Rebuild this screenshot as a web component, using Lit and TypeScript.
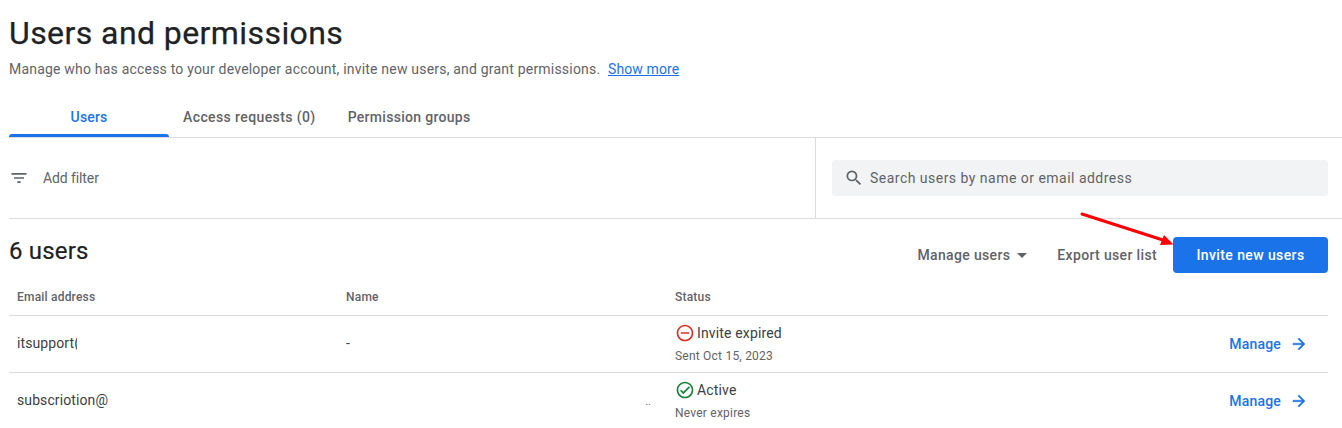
import { LitElement, html, css } from "lit";
import { customElement } from "lit/decorators.js";

const arrowRight = html`<svg class="arr" width="18" height="18" viewBox="0 0 24 24" fill="#1a73e8" stroke="#1a73e8" stroke-width="0.6"><path d="M12 4l-1.41 1.41L16.17 11H4v2h12.17l-5.58 5.59L12 20l8-8z"/></svg>`;

@customElement("app-root")
export class AppRoot extends LitElement {
  static styles = css`
    :host { display: block; position: relative; width: 1342px; height: 428px; overflow: hidden; background: #fff; font-family: Roboto, "Liberation Sans", sans-serif; color: #3c4043; }
    .page { padding-left: 9px; }
    h1 { margin: 0; padding-top: 13px; font-size: 32px; line-height: 40px; font-weight: 400; color: #202124; letter-spacing: 0.42px; -webkit-text-stroke: 0.25px #202124; }
    .desc { margin-top: 6px; font-size: 14px; line-height: 20px; color: #5f6368; letter-spacing: 0.2px; }
    .desc a { color: #1a73e8; margin-left: 4px; text-decoration: underline; letter-spacing: 0.1px; }
    .tabs { display: flex; margin-top: 16px; height: 42px; border-bottom: 1px solid #dadce0; }
    .tab { display: flex; align-items: center; justify-content: center; height: 42px; font-size: 14px; font-weight: 500; color: #5f6368; letter-spacing: 0.3px; padding-top: 2px; box-sizing: border-box; }
    .tab.on { width: 160px; color: #1a73e8; position: relative; letter-spacing: 0.15px; }
    .tab.on::after { content: ""; position: absolute; left: 0; right: 0; bottom: 0; height: 3px; background: #1a73e8; border-radius: 3px 3px 0 0; }
    .tab.a { margin-left: 14px; letter-spacing: 0.4px; }
    .tab.p { margin-left: 32px; }
    .filters { display: flex; height: 80px; border-bottom: 1px solid #dadce0; }
    .fl { width: 806px; display: flex; align-items: center; border-right: 1px solid #dadce0; color: #5f6368; font-size: 14px; letter-spacing: -0.1px; }
    .fl svg { margin-right: 14px; }
    .fr { flex: 1; display: flex; align-items: center; padding: 0 14px 0 16px; }
    .search { flex: 1; height: 36px; background: #f1f3f4; border-radius: 4px; display: flex; align-items: center; gap: 6px; padding-left: 12px; font-size: 14px; letter-spacing: 0.48px; color: #5f6368; }
    .bar { display: flex; align-items: center; justify-content: space-between; padding: 18px 14px 0 0; height: 36px; }
    h2 { margin: 0; font-size: 24px; font-weight: 400; color: #202124; letter-spacing: 0.2px; line-height: 28px; padding-bottom: 8px; -webkit-text-stroke: 0.2px #202124; }
    .actions { display: flex; align-items: center; font-size: 14px; font-weight: 500; color: #5f6368; letter-spacing: 0.35px; }
    .mu { display: flex; align-items: center; gap: 7px; margin-right: 30px; }
    .caret { width: 0; height: 0; border-left: 5px solid transparent; border-right: 5px solid transparent; border-top: 5px solid #5f6368; }
    .btn { margin-left: 16px; width: 155px; height: 36px; border-radius: 4px; background: #1a73e8; color: #fff; display: flex; align-items: center; justify-content: center; letter-spacing: 0.4px; }
    .table { margin-right: 14px; }
    .row { display: grid; grid-template-columns: 329px 329px 1fr auto; padding-left: 8px; border-bottom: 1px solid #dadce0; align-items: center; box-sizing: border-box; }
    .head { height: 43px; font-size: 12px; font-weight: 500; color: #5f6368; letter-spacing: 0.2px; padding-top: 6px; }
    .body { height: 57px; padding-bottom: 2px; font-size: 14px; color: #3c4043; letter-spacing: 0.1px; }
    .body:last-child { border-bottom-color: transparent; }
    .clip { width: 60px; overflow: hidden; white-space: nowrap; }
    .st { display: flex; align-items: center; gap: 2px; line-height: 20px; letter-spacing: 0.15px; }
    .sub { font-size: 12px; line-height: 16px; color: #5f6368; margin-top: 5px; letter-spacing: 0.22px; }
    .mg { display: flex; align-items: center; gap: 9px; color: #1a73e8; font-weight: 500; padding: 2px 20px 0 0; letter-spacing: 0.2px; }
    .dots { font-size: 10px; color: #5f6368; justify-self: end; padding-right: 24px; line-height: 10px; padding-top: 4px; }
    .overlay { position: absolute; left: 1075px; top: 205px; }
  `;

  render() {
    return html`
      <div class="page">
        <h1>Users and permissions</h1>
        <div class="desc">Manage who has access to your developer account, invite new users, and grant permissions. <a>Show more</a></div>
        <div class="tabs">
          <div class="tab on">Users</div>
          <div class="tab a">Access requests (0)</div>
          <div class="tab p">Permission groups</div>
        </div>
        <div class="filters">
          <div class="fl">
            <svg width="20" height="20" viewBox="0 0 24 24" fill="#5f6368"><path d="M10 18h4v-2h-4v2zM3 6v2h18V6H3zm3 7h12v-2H6v2z"/></svg>
            Add filter
          </div>
          <div class="fr">
            <div class="search">
              <svg width="20" height="20" viewBox="0 0 24 24" fill="#5f6368"><path d="M15.5 14h-.79l-.28-.27A6.47 6.47 0 0 0 16 9.5 6.5 6.5 0 1 0 9.5 16c1.61 0 3.09-.59 4.23-1.57l.27.28v.79l5 4.99L20.49 19l-4.99-5zm-6 0C7.01 14 5 11.99 5 9.5S7.01 5 9.5 5 14 7.01 14 9.5 11.99 14 9.5 14z"/></svg>
              Search users by name or email address
            </div>
          </div>
        </div>
        <div class="bar">
          <h2>6 users</h2>
          <div class="actions">
            <div class="mu">Manage users <span class="caret"></span></div>
            <div>Export user list</div>
            <div class="btn">Invite new users</div>
          </div>
        </div>
        <div class="table">
          <div class="row head"><div>Email address</div><div>Name</div><div>Status</div><div></div></div>
          <div class="row body">
            <div class="clip">itsupport(</div><div>-</div>
            <div>
              <div class="st"><svg width="20" height="20" viewBox="0 0 24 24" fill="#d93025"><path d="M7 11v2h10v-2H7zm5-9C6.48 2 2 6.48 2 12s4.48 10 10 10 10-4.48 10-10S17.52 2 12 2zm0 18c-4.41 0-8-3.59-8-8s3.59-8 8-8 8 3.59 8 8-3.59 8-8 8z"/></svg>Invite expired</div>
              <div class="sub">Sent Oct 15, 2023</div>
            </div>
            <div class="mg">Manage ${arrowRight}</div>
          </div>
          <div class="row body">
            <div>subscriotion@</div><div class="dots">..</div>
            <div>
              <div class="st"><svg width="20" height="20" viewBox="0 0 24 24" fill="#188038"><path d="M12 2C6.48 2 2 6.48 2 12s4.48 10 10 10 10-4.48 10-10S17.52 2 12 2zm0 18c-4.41 0-8-3.59-8-8s3.59-8 8-8 8 3.59 8 8-3.59 8-8 8zm4.59-12.42L10 14.17l-2.59-2.58L6 13l4 4 8-8-1.41-1.42z"/></svg>Active</div>
              <div class="sub">Never expires</div>
            </div>
            <div class="mg">Manage ${arrowRight}</div>
          </div>
        </div>
      </div>
      <svg class="overlay" width="105" height="50" viewBox="0 0 105 50">
        <path d="M7 9L91 36" stroke="#f00" stroke-width="3" stroke-linecap="round" fill="none"/>
        <path d="M98.5 39.5L85 40L89 30z" fill="#f00"/>
      </svg>
    `;
  }
}
